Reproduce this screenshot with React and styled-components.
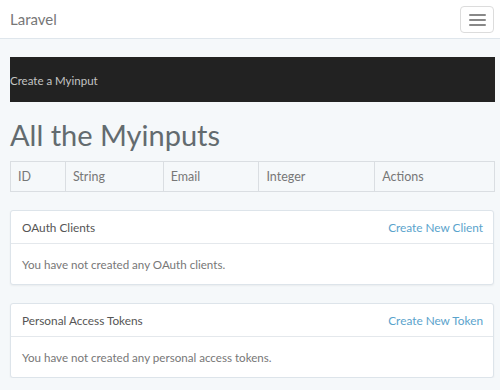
import styled, { createGlobalStyle } from "styled-components";

const GlobalStyle = createGlobalStyle`
  body {
    margin: 0;
    background: #f5f8fa;
    font-family: "Lato", "Liberation Sans", sans-serif;
    color: #636b6f;
  }
`;

const Navbar = styled.nav`
  height: 38px;
  background: #fff;
  border-bottom: 1px solid #dfe6ec;
  display: flex;
  align-items: center;
  justify-content: space-between;
  padding: 0 6px 0 10px;
`;

const Brand = styled.a`
  font-size: 15px;
  color: #777;
  text-decoration: none;
`;

const Toggle = styled.button`
  width: 34px;
  height: 27px;
  margin-top: 1px;
  background: #fff;
  border: 1px solid #dcdcdc;
  border-radius: 4px;
  display: flex;
  flex-direction: column;
  align-items: center;
  justify-content: center;
  gap: 3px;
  padding: 0;
`;

const Bar = styled.span`
  display: block;
  width: 17px;
  height: 2px;
  background: #888;
  border-radius: 1px;
`;

const Container = styled.main`
  padding: 18px 5px 0 10px;
`;

const DarkNav = styled.div`
  height: 45px;
  background: #222;
  display: flex;
  align-items: center;
  font-size: 11.5px;
  color: #c4c4c4;
  padding-top: 1px;
  box-sizing: border-box;
`;

const Title = styled.h1`
  margin: 14px 0 7px;
  font-size: 29px;
  font-weight: 400;
  line-height: 38px;
  color: #636b6f;
`;

const Table = styled.table`
  width: 485px;
  border-collapse: collapse;
  font-size: 12.5px;
  color: #777;
`;

const Th = styled.td`
  width: ${(p) => p.$w}px;
  height: 30px;
  padding: 0 0 0 7px;
  border: 1px solid #dadee2;
  box-sizing: border-box;
`;

const Panel = styled.section`
  width: 484px;
  margin-top: 18px;
  background: #fff;
  border: 1px solid #dde4ea;
  border-radius: 3px;
  box-shadow: 0 1px 2px rgba(0, 0, 0, 0.05);
  box-sizing: border-box;
`;

const PanelHead = styled.div`
  height: 32px;
  display: flex;
  align-items: center;
  justify-content: space-between;
  padding: 0 10px 0 11px;
  border-bottom: 1px solid #e4e8ec;
  font-size: 11.8px;
  color: #555;
`;

const Link = styled.a`
  color: #5aa3cc;
  text-decoration: none;
`;

const PanelBody = styled.div`
  height: 40px;
  display: flex;
  align-items: center;
  padding: 0 11px;
  font-size: 11.6px;
  color: #777;
`;

const cols = [
  ["ID", 55],
  ["String", 98],
  ["Email", 96],
  ["Integer", 116],
  ["Actions", 120],
];

function TokenPanel({ title, action, empty }) {
  return (
    <Panel>
      <PanelHead>
        <span>{title}</span>
        <Link href="#">{action}</Link>
      </PanelHead>
      <PanelBody>{empty}</PanelBody>
    </Panel>
  );
}

export default function App() {
  return (
    <>
      <GlobalStyle />
      <Navbar>
        <Brand href="#">Laravel</Brand>
        <Toggle>
          <Bar />
          <Bar />
          <Bar />
        </Toggle>
      </Navbar>
      <Container>
        <DarkNav>Create a Myinput</DarkNav>
        <Title>All the Myinputs</Title>
        <Table>
          <tbody>
            <tr>
              {cols.map(([label, w]) => (
                <Th key={label} $w={w}>
                  {label}
                </Th>
              ))}
            </tr>
          </tbody>
        </Table>
        <TokenPanel
          title="OAuth Clients"
          action="Create New Client"
          empty="You have not created any OAuth clients."
        />
        <TokenPanel
          title="Personal Access Tokens"
          action="Create New Token"
          empty="You have not created any personal access tokens."
        />
      </Container>
    </>
  );
}
